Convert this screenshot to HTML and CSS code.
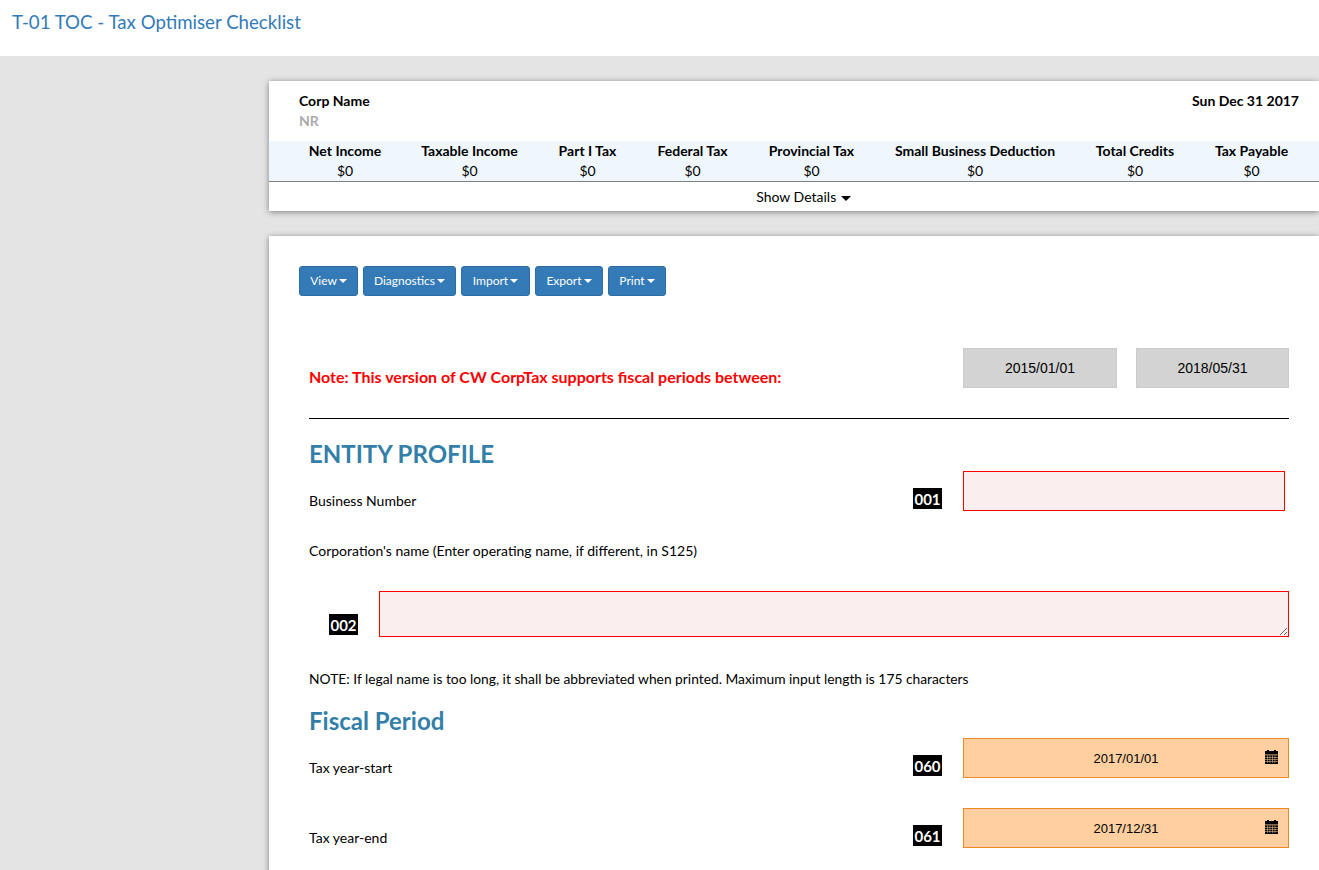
FILE: index.html

```html
<!DOCTYPE html>
<html lang="en">
<head>
  <meta charset="UTF-8" />
  <title>T-01 TOC - Tax Optimiser Checklist</title>
  <link rel="stylesheet" href="styles.css">
</head>
<body>
  <header class="topbar">
    <a class="page-title" href="#">T-01 TOC - Tax Optimiser Checklist</a>
  </header>

  <main class="content">
    <section class="card summary">
      <div class="summary-head">
        <div>
          <div class="corp-name">Corp Name</div>
          <div class="corp-sub">NR</div>
        </div>
        <div class="corp-date">Sun Dec 31 2017</div>
      </div>
      <div class="totals">
        <div class="total"><strong>Net Income</strong><span>$0</span></div>
        <div class="total"><strong>Taxable Income</strong><span>$0</span></div>
        <div class="total"><strong>Part I Tax</strong><span>$0</span></div>
        <div class="total"><strong>Federal Tax</strong><span>$0</span></div>
        <div class="total"><strong>Provincial Tax</strong><span>$0</span></div>
        <div class="total"><strong>Small Business Deduction</strong><span>$0</span></div>
        <div class="total"><strong>Total Credits</strong><span>$0</span></div>
        <div class="total"><strong>Tax Payable</strong><span>$0</span></div>
      </div>
      <div class="show-details">Show Details <span class="caret caret-lg"></span></div>
    </section>

    <section class="card form-card">
      <div class="toolbar">
        <button class="btn btn-view">View <span class="caret"></span></button>
        <button class="btn btn-diag">Diagnostics <span class="caret"></span></button>
        <button class="btn btn-import">Import <span class="caret"></span></button>
        <button class="btn btn-export">Export <span class="caret"></span></button>
        <button class="btn btn-print">Print <span class="caret"></span></button>
      </div>

      <div class="form-body">
        <div class="note-row">
          <div class="note-red">Note: This version of CW CorpTax supports fiscal periods between:</div>
          <div class="note-dates">
            <input class="field field-grey" type="text" value="2015/01/01" readonly>
            <input class="field field-grey" type="text" value="2018/05/31" readonly>
          </div>
        </div>
        <hr class="rule">

        <h2 class="section-title">ENTITY PROFILE</h2>
        <div class="row row-bn">
          <label class="row-label">Business Number</label>
          <span class="code">001</span>
          <input class="field field-req field-bn" type="text">
        </div>

        <p class="plain-line line-corp">Corporation's name (Enter operating name, if different, in S125)</p>
        <div class="row-name">
          <span class="code">002</span>
          <textarea class="field-req name-area"></textarea>
        </div>
        <p class="plain-line line-note">NOTE: If legal name is too long, it shall be abbreviated when printed. Maximum input length is 175 characters</p>

        <h2 class="section-title title-fiscal">Fiscal Period</h2>
        <div class="row row-date">
          <label class="row-label">Tax year-start</label>
          <span class="code">060</span>
          <div class="date-wrap">
            <input class="field field-date" type="text" value="2017/01/01">
            <svg class="cal" viewBox="0 0 13 14"><path d="M0 1h2V0h2v1h5V0h2v1h2v3.4H0zM0 5.2h13V14H0z"/><path class="cal-grid" d="M0 7.1h13v.5H0zM0 9.1h13v.5H0zM0 11.1h13v.5H0zM2.2 5.2h.5V13h-.5zM4.7 5.2h.5V13h-.5zM7.2 5.2h.5V13h-.5zM9.7 5.2h.5V13h-.5z"/></svg>
          </div>
        </div>
        <div class="row row-date">
          <label class="row-label">Tax year-end</label>
          <span class="code">061</span>
          <div class="date-wrap">
            <input class="field field-date" type="text" value="2017/12/31">
            <svg class="cal" viewBox="0 0 13 14"><path d="M0 1h2V0h2v1h5V0h2v1h2v3.4H0zM0 5.2h13V14H0z"/><path class="cal-grid" d="M0 7.1h13v.5H0zM0 9.1h13v.5H0zM0 11.1h13v.5H0zM2.2 5.2h.5V13h-.5zM4.7 5.2h.5V13h-.5zM7.2 5.2h.5V13h-.5zM9.7 5.2h.5V13h-.5z"/></svg>
          </div>
        </div>
      </div>
    </section>
  </main>
</body>
</html>
```

FILE: styles.css

```css
* {
  box-sizing: border-box;
}
html, body {
  height: 870px;
  overflow: hidden;
}
body {
  margin: 0;
  background-color: #e4e4e4;
  font-family: Lato, "Liberation Sans", sans-serif;
  font-size: 14px;
  color: #000;
}
.topbar {
  height: 56px;
  background: #fff;
  padding: 11px 12px 0;
}
.page-title {
  font-size: 18.67px;
  line-height: 22px;
  color: #337ab7;
  text-decoration: none;
}
.content {
  height: 814px;
  overflow: hidden;
  padding: 25px 0 0 269px;
}
.card {
  background: #fff;
  box-shadow: 0 1px 6px rgba(0, 0, 0, 0.45);
}
.summary {
  height: 130px;
  margin-bottom: 25px;
}
.summary-head {
  display: flex;
  justify-content: space-between;
  height: 60px;
  padding: 10px 20px 0 30px;
  line-height: 20px;
}
.corp-name, .corp-date {
  font-weight: bold;
}
.corp-sub {
  font-weight: bold;
  color: #aaa;
}
.totals {
  display: grid;
  grid-template-columns: 112px 137px 99px 111px 127px 200px 120px 113px;
  height: 41px;
  padding-left: 20px;
  background: #eff7fd;
  border-bottom: 1px solid #808080;
}
.total {
  text-align: center;
  line-height: 20px;
}
.total strong, .total span {
  display: block;
}
.show-details {
  padding: 5px 0 0 19px;
  line-height: 20px;
  text-align: center;
}
.caret {
  display: inline-block;
  margin-left: -1px;
  vertical-align: middle;
  border-top: 4px solid currentColor;
  border-left: 4px solid transparent;
  border-right: 4px solid transparent;
}
.caret-lg {
  margin-left: 1px;
  border-top-width: 5px;
  border-left-width: 5px;
  border-right-width: 5px;
}
.form-card {
  height: 700px;
  padding: 30px;
}
.toolbar {
  display: flex;
  gap: 5px;
}
.btn {
  height: 30px;
  padding: 0 0 2px;
  background: #337ab7;
  color: #fff;
  border: 1px solid #2e6da4;
  border-radius: 3px;
  font-family: Lato, "Liberation Sans", sans-serif;
  font-size: 12px;
}
.btn-view {
  width: 59px;
}
.btn-diag {
  width: 93px;
}
.btn-import {
  width: 69px;
}
.btn-export {
  width: 68px;
}
.btn-print {
  width: 58px;
}
.form-body {
  width: 980px;
  margin-left: 10px;
}
.note-row {
  display: flex;
  justify-content: space-between;
  height: 40px;
  margin-top: 52px;
}
.note-red {
  padding-top: 19px;
  font-size: 16px;
  line-height: 20px;
  font-weight: bold;
  color: #f00;
}
.note-dates {
  display: flex;
  gap: 19px;
}
.field {
  display: block;
  height: 40px;
  font-family: "Liberation Sans", Arial, sans-serif;
  font-size: 14px;
  text-align: center;
  color: #000;
  outline: none;
}
.field-grey {
  width: 154px;
  background: #d3d3d3;
  border: 1px solid #ccc;
}
.note-dates .field-grey:last-child {
  width: 153px;
}
.rule {
  height: 1px;
  margin: 30px 0 0;
  border: 0;
  background: #000;
}
.section-title {
  margin: 0;
  padding-top: 19px;
  font-size: 24px;
  line-height: 32px;
  font-weight: bold;
  color: #337fa8;
}
.row {
  display: flex;
  align-items: flex-end;
}
.row-label {
  flex: 1;
  line-height: 20px;
}
.code {
  display: block;
  width: 29px;
  height: 21px;
  background: #000;
  color: #fff;
  font-weight: bold;
  font-size: 15px;
  line-height: 22px;
  text-align: center;
}
.field-req {
  background: #fbeeee;
  border: 1px solid #f00;
  outline: none;
}
.row-bn {
  height: 40px;
  margin-top: 1px;
}
.row-bn .code {
  margin: 0 21px 2px 0;
}
.field-bn {
  width: 322px;
  margin-right: 4px;
}
.plain-line {
  margin: 0;
  line-height: 20px;
}
.line-corp {
  margin-top: 30px;
}
.row-name {
  display: flex;
  align-items: flex-end;
  height: 46px;
  margin-top: 30px;
}
.row-name .code {
  margin: 0 21px 2px 20px;
}
.name-area {
  display: block;
  width: 910px;
  height: 46px;
  margin: 0;
}
.line-note {
  margin-top: 32px;
  font-size: 13.8px;
}
.title-fiscal {
  padding-top: 16px;
  margin-bottom: 1px;
}
.row-date {
  height: 40px;
  margin-bottom: 30px;
}
.row-date .code {
  margin: 0 21px 2px 0;
}
.date-wrap {
  position: relative;
  width: 326px;
}
.field-date {
  width: 100%;
  font-size: 13px;
  background: #ffcfa0;
  border: 1px solid #ee8a25;
}
.cal {
  position: absolute;
  top: 12px;
  right: 11px;
  width: 13px;
  height: 14px;
}
.cal-grid {
  fill: #ffcfa0;
}
```
